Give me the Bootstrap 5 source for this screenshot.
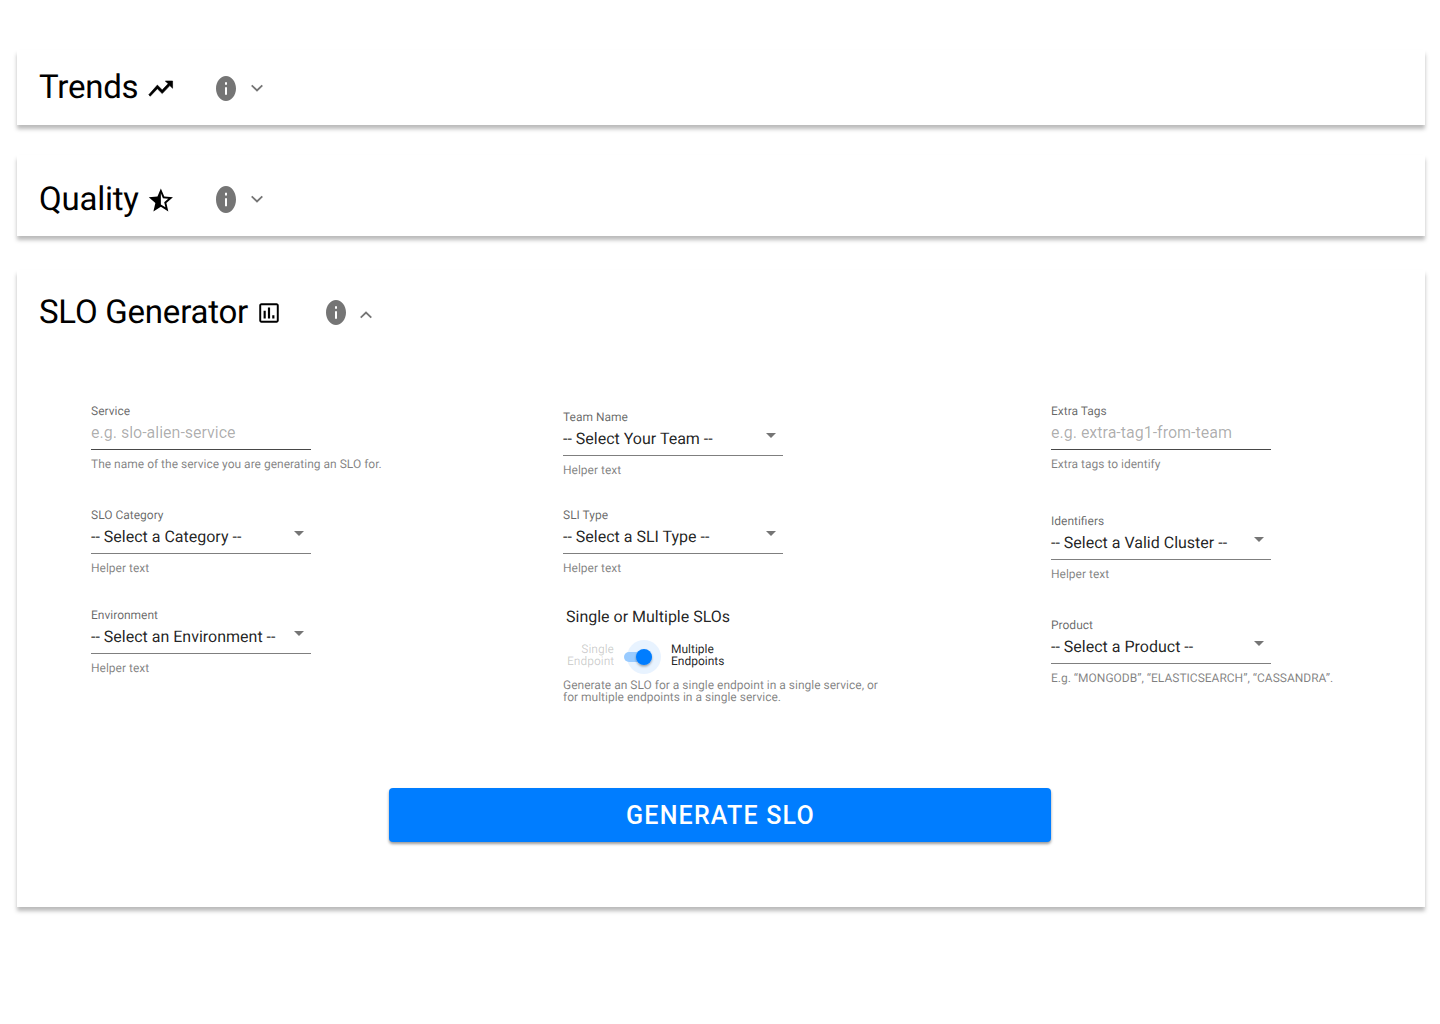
<!DOCTYPE html>
<html lang="en">
<head>
<meta charset="utf-8">
<meta name="viewport" content="width=device-width, initial-scale=1">
<title>SLO Generator</title>
<link rel="stylesheet" href="https://cdn.jsdelivr.net/npm/bootstrap@5.3.0/dist/css/bootstrap.min.css">
<style>
body{font-family:Roboto,sans-serif;color:#000;background:#fff;-webkit-font-smoothing:antialiased;text-rendering:geometricPrecision}
.board{padding:50px 15px 0 17px;min-height:1024px}
.panel{background:#fff;box-shadow:0 4px 4px rgba(0,0,0,.27)}
.panel-trends{height:75px;margin-bottom:30px}
.panel-quality{height:81px;margin-bottom:34px}
.panel-slo{height:637px}
.panel-head{padding-left:22px}
.panel-trends .panel-head{padding-top:17px}
.panel-quality .panel-head{padding-top:24px}
.panel-slo .panel-head{padding-top:22px}
.panel-title{font-size:33px;line-height:38px;padding-top:2px;font-weight:400;margin:0;white-space:nowrap;letter-spacing:-.22px}
.title-short{width:107px}
.title-long{width:217px}
.title-icon{width:29px;height:29px;margin-top:3px}
.icon-trend{stroke:#000;stroke-width:.5}
.icon-chart{width:26px;height:26px;margin:1px 3px 0 0}
.info-icon{width:20px;height:25px;margin-left:41px;margin-top:1px;fill:#757575}
.panel-trends .info-icon{margin-top:2px}
.panel-quality .info-icon{height:27px;margin-top:1px}
.chev{width:12px;height:8px;margin-left:15px;fill:none;stroke:#757575;stroke-width:1.8}
.panel-trends .chev{margin-top:2px}
.panel-quality .chev{margin-top:-1px}
.panel-slo .chev{margin:6px 0 0 14px}
.fields{padding:72px 0 0 74px}
.col-a{width:472px}.col-b{width:488px}
.field{width:220px;height:67px}
.field-label,.field-help{font-size:12px;line-height:14px;white-space:nowrap}
.field-label{color:rgba(0,0,0,.6);display:block}
.field-help{color:rgba(0,0,0,.5);margin-top:7px}
.field-value{height:32px;padding:3px 7px 4px 0;border-bottom:1px solid rgba(0,0,0,.5);font-size:16px;line-height:24px;color:rgba(0,0,0,.87);white-space:nowrap}
input.field-value{display:block;width:100%;border-width:0 0 1px;border-color:rgba(0,0,0,.72);padding:2px 0 5px;background:none;outline:0}
input.field-value::placeholder{color:rgba(0,0,0,.32);opacity:1}
.caret{width:10px;height:5px;fill:#757575;margin-top:-7px}
.switch-title{font-size:16px;line-height:24px;color:rgba(0,0,0,.87);padding-left:3px}
.switch-row{font-size:12px;line-height:12px;height:34px;margin-top:11px;padding-left:4px}
.switch-off{width:47px;color:rgba(0,0,0,.2);padding-bottom:4px}
.switch-on{color:rgba(0,0,0,.87);margin-left:10px;padding-bottom:4px}
.switch-help{font-size:12px;line-height:12px;color:rgba(0,0,0,.5);margin-top:5px;white-space:nowrap}
.btn.btn-generate{width:662px;height:54px;margin-top:85px;margin-left:372px;border:0;border-radius:4px;background:#007dff;color:#fff;font-size:25px;font-weight:500;letter-spacing:1.2px;line-height:54px;padding:1px 0 0 1px;box-shadow:0 2px 3px rgba(0,0,0,.4)}
.f-cat{margin-top:37px}.f-env{margin-top:33px}
.f-team{margin-top:6px}.f-sli{margin-top:31px}.f-switch{margin-top:30px}
.f-ident{margin-top:43px}.f-prod{margin-top:37px}
</style>
<script src="https://cdn.jsdelivr.net/npm/bootstrap@5.3.0/dist/js/bootstrap.bundle.min.js"></script>
</head>
<body>
<main class="board">
  <section class="panel panel-trends">
    <div class="panel-head d-flex align-items-center">
      <h2 class="panel-title title-short">Trends</h2>
      <svg class="title-icon icon-trend" viewBox="0 0 24 24"><path d="M16 5.800l2.290 2.290-4.880 5.080-4-4L2.300 17.200 3.500 18.400l5.910-6.200 4 4 6.300-6.600L22 11.800V5.800z"/></svg>
      <svg class="info-icon" viewBox="2 2 20 20" preserveAspectRatio="none"><path d="M12 2C6.48 2 2 6.48 2 12s4.48 10 10 10 10-4.48 10-10S17.52 2 12 2zm1 15h-2v-6h2v6zm0-8h-2V7h2v2z"/></svg>
      <svg class="chev" viewBox="0 0 12 8"><path d="M.7 1.3L6 6.5l5.3-5.2"/></svg>
    </div>
  </section>
  <section class="panel panel-quality">
    <div class="panel-head d-flex align-items-center">
      <h2 class="panel-title title-short">Quality</h2>
      <svg class="title-icon" viewBox="-.3 0 24 24"><path d="M22 9.24l-7.19-.62L12 2 9.19 8.63 2 9.24l5.46 4.73L5.82 21 12 17.27 18.18 21l-1.63-7.03L22 9.24zM12 15.4V6.1l1.71 4.04 4.38.38-3.32 2.88 1 4.28L12 15.4z"/></svg>
      <svg class="info-icon" viewBox="2 2 20 20" preserveAspectRatio="none"><path d="M12 2C6.48 2 2 6.48 2 12s4.48 10 10 10 10-4.48 10-10S17.52 2 12 2zm1 15h-2v-6h2v6zm0-8h-2V7h2v2z"/></svg>
      <svg class="chev" viewBox="0 0 12 8"><path d="M.7 1.3L6 6.5l5.3-5.2"/></svg>
    </div>
  </section>
  <section class="panel panel-slo">
    <div class="panel-head d-flex align-items-center">
      <h2 class="panel-title title-long">SLO Generator</h2>
      <svg class="title-icon icon-chart" viewBox="0 0 24 24"><path d="M9 17H7v-7h2v7zm4 0h-2V7h2v10zm4 0h-2v-3h2v3zM19.200 19.200H4.800V4.800h14.400v14.400zM19 3H5c-1.100 0-2 .9-2 2v14c0 1.100.9 2 2 2h14c1.100 0 2-.9 2-2V5c0-1.100-.9-2-2-2z" fill-rule="evenodd"/></svg>
      <svg class="info-icon" viewBox="2 2 20 20" preserveAspectRatio="none"><path d="M12 2C6.48 2 2 6.48 2 12s4.48 10 10 10 10-4.48 10-10S17.52 2 12 2zm1 15h-2v-6h2v6zm0-8h-2V7h2v2z"/></svg>
      <svg class="chev" viewBox="0 0 12 8"><path d="M.7 6.7L6 1.5l5.3 5.2"/></svg>
    </div>
    <div class="fields d-flex">
      <div class="col-a">
        <div class="field"><label class="field-label" for="service">Service</label><input id="service" class="field-value" placeholder="e.g. slo-alien-service"><div class="field-help">The name of the service you are generating an SLO for.</div></div>
        <div class="field f-cat"><span class="field-label">SLO Category</span><div class="field-value d-flex justify-content-between align-items-center"><span>-- Select a Category --</span><svg class="caret" viewBox="0 0 10 5"><path d="M0 0h10L5 5z"/></svg></div><div class="field-help">Helper text</div></div>
        <div class="field f-env"><span class="field-label">Environment</span><div class="field-value d-flex justify-content-between align-items-center"><span>-- Select an Environment --</span><svg class="caret" viewBox="0 0 10 5"><path d="M0 0h10L5 5z"/></svg></div><div class="field-help">Helper text</div></div>
      </div>
      <div class="col-b">
        <div class="field f-team"><span class="field-label">Team Name</span><div class="field-value d-flex justify-content-between align-items-center"><span>-- Select Your Team --</span><svg class="caret" viewBox="0 0 10 5"><path d="M0 0h10L5 5z"/></svg></div><div class="field-help">Helper text</div></div>
        <div class="field f-sli"><span class="field-label">SLI Type</span><div class="field-value d-flex justify-content-between align-items-center"><span>-- Select a SLI Type --</span><svg class="caret" viewBox="0 0 10 5"><path d="M0 0h10L5 5z"/></svg></div><div class="field-help">Helper text</div></div>
        <div class="f-switch">
          <div class="switch-title">Single or Multiple SLOs</div>
          <div class="switch-row d-flex align-items-center">
            <div class="switch-off text-end">Single<br>Endpoint</div>
            <svg width="47" height="34" viewBox="0 0 47 34">
              <defs><filter id="knobShadow" x="-50%" y="-50%" width="200%" height="200%"><feDropShadow dx="0" dy="1.5" stdDeviation="1" flood-opacity=".35"/></filter></defs>
              <circle cx="30" cy="17" r="17" fill="#007dff" fill-opacity=".09"/>
              <rect x="10" y="12" width="28" height="10" rx="5" fill="#99cbff"/>
              <circle cx="30" cy="17" r="8" fill="#007dff" filter="url(#knobShadow)"/>
            </svg>
            <div class="switch-on">Multiple<br>Endpoints</div>
          </div>
          <div class="switch-help">Generate an SLO for a single endpoint in a single service, or<br>for multiple endpoints in a single service.</div>
        </div>
      </div>
      <div>
        <div class="field"><label class="field-label" for="tags">Extra Tags</label><input id="tags" class="field-value" placeholder="e.g. extra-tag1-from-team"><div class="field-help">Extra tags to identify</div></div>
        <div class="field f-ident"><span class="field-label">Identifiers</span><div class="field-value d-flex justify-content-between align-items-center"><span>-- Select a Valid Cluster --</span><svg class="caret" viewBox="0 0 10 5"><path d="M0 0h10L5 5z"/></svg></div><div class="field-help">Helper text</div></div>
        <div class="field f-prod"><span class="field-label">Product</span><div class="field-value d-flex justify-content-between align-items-center"><span>-- Select a Product --</span><svg class="caret" viewBox="0 0 10 5"><path d="M0 0h10L5 5z"/></svg></div><div class="field-help">E.g. “MONGODB”, “ELASTICSEARCH”, “CASSANDRA”.</div></div>
      </div>
    </div>
    <button class="btn btn-generate d-block" type="button">GENERATE SLO</button>
  </section>
</main>
</body>
</html>
